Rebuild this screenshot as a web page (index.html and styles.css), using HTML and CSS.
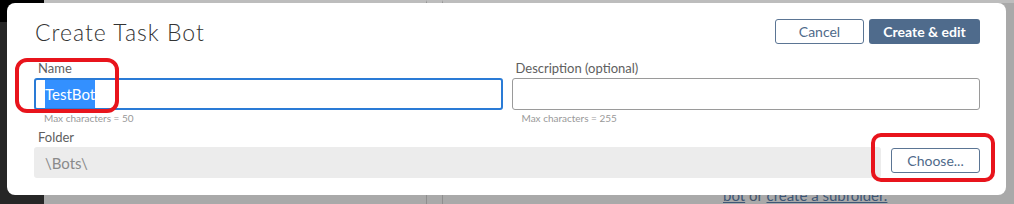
FILE: index.html
```html
<!DOCTYPE html>
<html lang="en">
<head>
  <meta charset="UTF-8">
  <title>Create Task Bot</title>
  <link rel="stylesheet" href="styles.css">
</head>
<body>
  <div class="page">
    <div class="sidebar"><div class="sidebar-top"></div></div>
    <div class="pane pane-left"></div>
    <div class="pane pane-gap"></div>
    <div class="pane pane-right">
      <p class="hint-links"><a href="#">bot</a> or <a href="#">create a subfolder.</a></p>
    </div>
  </div>

  <div class="modal">
    <div class="modal-header">
      <h1>Create Task Bot</h1>
      <div class="actions">
        <button type="button" class="btn btn-outline">Cancel</button>
        <button type="button" class="btn btn-primary">Create &amp; edit</button>
      </div>
    </div>

    <div class="fields">
      <div class="field">
        <label for="bot_name">Name</label>
        <div class="input input-focus" id="bot_name"><span class="selected">TestBot</span></div>
        <div class="hint">Max characters = 50</div>
      </div>
      <div class="field">
        <label for="bot_desc">Description (optional)</label>
        <div class="input" id="bot_desc"></div>
        <div class="hint">Max characters = 255</div>
      </div>
    </div>

    <label class="folder-label">Folder</label>
    <div class="folder-row">
      <div class="folder-path">\Bots\</div>
      <button type="button" class="btn btn-outline btn-choose">Choose...</button>
    </div>

    <!-- red markup drawn on top of the screenshot -->
    <div class="mark mark-name"></div>
    <div class="mark mark-choose"></div>
  </div>
</body>
</html>
```

FILE: styles.css
```css
body {
  margin: 0;
  font-family: Lato, "Open Sans", sans-serif;
  background: #a9a9a9;
  overflow: hidden;
}
.page {
  display: flex;
  height: 204px;
}
.sidebar {
  width: 44px;
  background: #262626;
}
.sidebar-top {
  height: 22px;
  background: #000;
}
.pane {
  background: #a9a9a9;
  border-top: 3px solid #bdbdbd;
}
.pane-left {
  width: 382px;
  border-right: 1px solid #8e8e8e;
}
.pane-gap {
  width: 15px;
  border-right: 1px solid #8e8e8e;
}
.pane-right {
  flex: 1;
  padding-left: 280px;
}
.hint-links {
  margin: 183px 0 0;
  font-size: 15px;
  color: #44546a;
}
.hint-links a {
  color: #3d5676;
}

.modal {
  position: absolute;
  left: 7px;
  top: 3px;
  width: 999px;
  height: 192px;
  box-sizing: border-box;
  padding: 16px 26px 0 27px;
  background: #fff;
  border-radius: 8px;
}
.modal-header {
  display: flex;
  align-items: center;
  justify-content: space-between;
  height: 25px;
}
h1 {
  margin: 0 0 0 1px;
  font-size: 23px;
  font-weight: 300;
  letter-spacing: 1px;
  color: #333;
}
.actions {
  display: flex;
  gap: 5px;
}
.btn {
  height: 25px;
  padding: 0;
  border-radius: 3px;
  font-family: inherit;
  font-size: 14px;
  cursor: pointer;
}
.btn-outline {
  width: 89px;
  background: #fff;
  color: #4f6a8a;
  border: 1px solid #5b7594;
}
.btn-primary {
  width: 111px;
  background: #4f6b8c;
  color: #fff;
  border: none;
  font-weight: bold;
}

.fields {
  display: flex;
  gap: 9px;
  margin-top: 16px;
}
.field {
  flex: 1;
}
label {
  display: block;
  padding-left: 4px;
  font-size: 13px;
  line-height: 16px;
  color: #606060;
}
.input {
  box-sizing: border-box;
  height: 32px;
  margin-top: 2px;
  border: 1px solid #9a9a9a;
  border-radius: 3px;
  display: flex;
  align-items: center;
  padding: 0 10px;
  font-size: 15px;
}
.input-focus {
  border: 2px solid #2a7bd6;
  padding: 0 9px;
}
.selected {
  display: flex;
  align-items: center;
  height: 28px;
  background: #3390ff;
  color: #fff;
}
.hint {
  margin-top: 2px;
  padding-left: 10px;
  font-size: 10px;
  line-height: 12px;
  color: #999;
}

.folder-label {
  margin-top: 5px;
}
.folder-row {
  display: flex;
  gap: 10px;
  margin-top: 2px;
}
.folder-path {
  flex: 1;
  height: 31px;
  box-sizing: border-box;
  padding-left: 11px;
  display: flex;
  align-items: center;
  background: #ececec;
  border-radius: 3px;
  font-size: 15px;
  color: #8a8a8a;
}
.btn-choose {
  margin-top: 1px;
}

.mark {
  position: absolute;
  border: 4px solid #e8141c;
  border-radius: 12px;
}
.mark-name {
  left: 8px;
  top: 55px;
  width: 96px;
  height: 47px;
}
.mark-choose {
  left: 864px;
  top: 130px;
  width: 116px;
  height: 41px;
  border-radius: 10px;
}
```
